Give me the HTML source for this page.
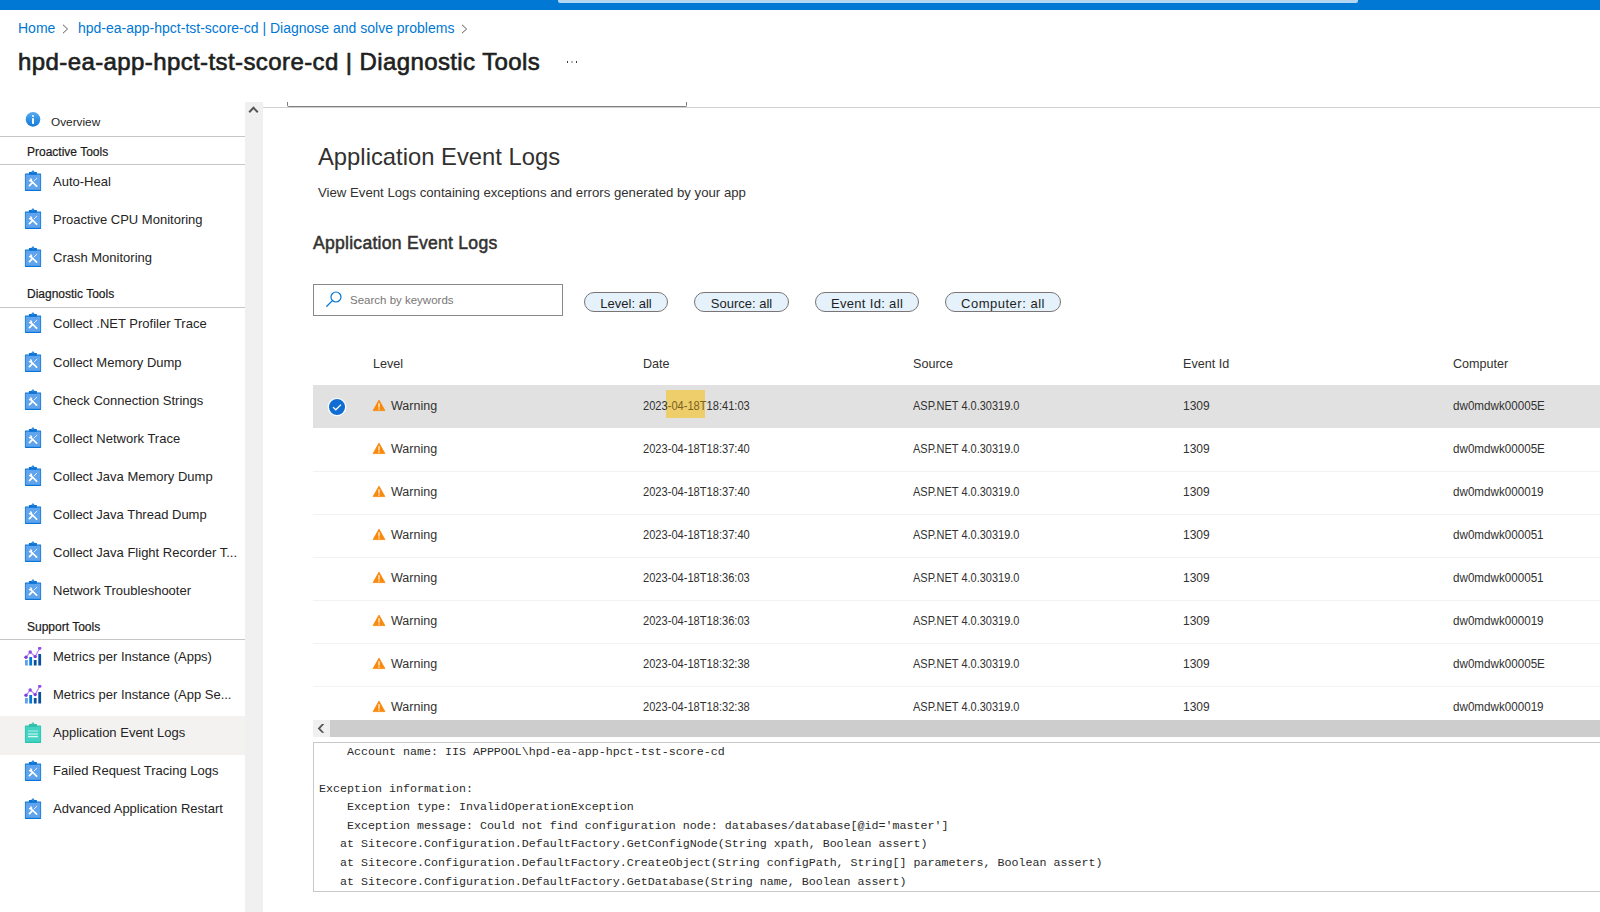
<!DOCTYPE html>
<html><head><meta charset="utf-8">
<style>
*{margin:0;padding:0;box-sizing:border-box}
html,body{width:1600px;height:912px;overflow:hidden;background:#fff;font-family:"Liberation Sans",sans-serif;color:#323130}
.a{position:absolute;white-space:nowrap}
#topbar{position:absolute;left:0;top:0;width:1600px;height:10px;background:#0078d4}
#topsearch{position:absolute;left:558px;top:0;width:800px;height:3px;background:#b3d6f2;border-radius:0 0 2px 2px}
.bc{font-size:14px;color:#0078d4;top:20px;line-height:17px}
.chev{position:absolute;top:24px;width:7px;height:10px}
#title{left:18px;top:48px;font-size:24px;line-height:28px;font-weight:normal;-webkit-text-stroke:0.65px #201f1e;letter-spacing:0.4px;color:#201f1e}
.sh{position:absolute;left:27px;font-size:12px;line-height:16px;color:#1b1a19;-webkit-text-stroke:0.2px #1b1a19;white-space:nowrap}
.st{position:absolute;left:53px;font-size:13px;line-height:16px;color:#252423;white-space:nowrap}
.sl{position:absolute;left:0;width:245px;height:1px;background:#c8c6c4}
#vscroll{position:absolute;left:245px;top:102px;width:18px;height:810px;background:#f0f0f0}
#hdrline{position:absolute;left:263px;top:107px;width:1337px;height:1px;background:#d0d0d0}
#hdrbox{position:absolute;left:287px;top:102px;width:400px;height:5px;border:1px solid #808080;border-top:none;border-radius:0 0 2px 2px;background:#fff}
.pill{position:absolute;top:292px;height:20px;border:1px solid #7a7574;border-radius:10px;background:#e5f1fb;font-size:13px;color:#201f1e;text-align:center;line-height:21px;white-space:nowrap}
.th{position:absolute;top:356px;font-size:12.6px;line-height:16px;color:#323130;white-space:nowrap}
.row{position:absolute;left:313px;width:1287px;height:43px}
.row .c{position:absolute;top:13px;font-size:12.5px;line-height:16px;color:#323130;white-space:nowrap}
.row .c2{position:absolute;top:14px;font-size:12px;line-height:14px;color:#323130;white-space:nowrap;transform-origin:0 50%}
#hscroll{position:absolute;left:313px;top:720px;width:1287px;height:17px;background:#cdcdcd}
#hscroll .l{position:absolute;left:0;top:0;width:17px;height:17px;background:#f0f0f0}
#detail{position:absolute;left:313px;top:742px;width:1300px;height:150px;border:1px solid #c8c8c8;font-family:"Liberation Mono",monospace;font-size:11.67px;color:#2a2a2a;background:#fff}
.dl{position:absolute;left:5px;white-space:pre;line-height:18.45px}
</style></head><body>
<div id="topbar"></div><div id="topsearch"></div>

<div class="a bc" style="left:18px">Home</div>
<svg class="chev" style="left:62px" viewBox="0 0 7 10"><path d="M1 0.8 L5.6 5 L1 9.2" fill="none" stroke="#605e5c" stroke-width="1"/></svg>
<div class="a bc" style="left:78px">hpd-ea-app-hpct-tst-score-cd | Diagnose and solve problems</div>
<svg class="chev" style="left:461px" viewBox="0 0 7 10"><path d="M1 0.8 L5.6 5 L1 9.2" fill="none" stroke="#605e5c" stroke-width="1"/></svg>
<div class="a" id="title">hpd-ea-app-hpct-tst-score-cd | Diagnostic Tools</div>
<svg style="position:absolute;left:566px;top:60px" width="12" height="4"><rect x="1" y="1" width="1" height="2" fill="#3b3a39"/><rect x="5.5" y="1" width="1" height="2" fill="#777"/><rect x="10" y="1" width="1" height="2" fill="#3b3a39"/></svg>

<svg width="16" height="16" viewBox="0 0 16 16" style="position:absolute;left:25px;top:112px"><defs><linearGradient id="ig" x1="0" y1="0" x2="0" y2="1"><stop offset="0" stop-color="#55aaf0"/><stop offset="1" stop-color="#1379d8"/></linearGradient></defs><circle cx="8" cy="7.4" r="7.3" fill="url(#ig)"/><rect x="7.05" y="3.2" width="1.9" height="1.6" fill="#fff"/><rect x="7.05" y="6.2" width="1.9" height="5.7" fill="#fff"/></svg>
<div class="st" style="top:114px;left:51px;font-size:11.8px">Overview</div>
<div class="sl" style="top:136px"></div>
<div class="sh" style="top:144px">Proactive Tools</div>
<div class="sl" style="top:164px"></div>
<svg width="18" height="22" viewBox="0 0 18 22" style="position:absolute;left:24px;top:170px"><rect x="0.9" y="3.5" width="16.2" height="17.4" rx="0.6" fill="#0b74d6"/><rect x="1.6" y="4.5" width="14.8" height="15.3" fill="#5fa4ec"/><rect x="4.9" y="1.9" width="8" height="2.9" rx="0.3" fill="#0b74d6"/><circle cx="8.9" cy="1.6" r="1.2" fill="#0b74d6"/><circle cx="8.9" cy="1.9" r="0.55" fill="#8fc0f2"/>
<path d="M7.3 11 L12.6 16.2" stroke="#fff" stroke-width="1.7" stroke-linecap="round"/><circle cx="6.5" cy="10.1" r="1.75" fill="#fff"/><circle cx="5.5" cy="9.1" r="0.95" fill="#5fa4ec"/><path d="M12.8 8.3 L10.1 10.9" stroke="#fff" stroke-width="1" stroke-linecap="round" opacity="0.85"/><path d="M8.6 12.4 L5.5 15.6" stroke="#fff" stroke-width="1.8" stroke-linecap="round"/></svg>
<div class="st" style="top:174px">Auto-Heal</div>
<svg width="18" height="22" viewBox="0 0 18 22" style="position:absolute;left:24px;top:208px"><rect x="0.9" y="3.5" width="16.2" height="17.4" rx="0.6" fill="#0b74d6"/><rect x="1.6" y="4.5" width="14.8" height="15.3" fill="#5fa4ec"/><rect x="4.9" y="1.9" width="8" height="2.9" rx="0.3" fill="#0b74d6"/><circle cx="8.9" cy="1.6" r="1.2" fill="#0b74d6"/><circle cx="8.9" cy="1.9" r="0.55" fill="#8fc0f2"/>
<path d="M7.3 11 L12.6 16.2" stroke="#fff" stroke-width="1.7" stroke-linecap="round"/><circle cx="6.5" cy="10.1" r="1.75" fill="#fff"/><circle cx="5.5" cy="9.1" r="0.95" fill="#5fa4ec"/><path d="M12.8 8.3 L10.1 10.9" stroke="#fff" stroke-width="1" stroke-linecap="round" opacity="0.85"/><path d="M8.6 12.4 L5.5 15.6" stroke="#fff" stroke-width="1.8" stroke-linecap="round"/></svg>
<div class="st" style="top:212px">Proactive CPU Monitoring</div>
<svg width="18" height="22" viewBox="0 0 18 22" style="position:absolute;left:24px;top:246px"><rect x="0.9" y="3.5" width="16.2" height="17.4" rx="0.6" fill="#0b74d6"/><rect x="1.6" y="4.5" width="14.8" height="15.3" fill="#5fa4ec"/><rect x="4.9" y="1.9" width="8" height="2.9" rx="0.3" fill="#0b74d6"/><circle cx="8.9" cy="1.6" r="1.2" fill="#0b74d6"/><circle cx="8.9" cy="1.9" r="0.55" fill="#8fc0f2"/>
<path d="M7.3 11 L12.6 16.2" stroke="#fff" stroke-width="1.7" stroke-linecap="round"/><circle cx="6.5" cy="10.1" r="1.75" fill="#fff"/><circle cx="5.5" cy="9.1" r="0.95" fill="#5fa4ec"/><path d="M12.8 8.3 L10.1 10.9" stroke="#fff" stroke-width="1" stroke-linecap="round" opacity="0.85"/><path d="M8.6 12.4 L5.5 15.6" stroke="#fff" stroke-width="1.8" stroke-linecap="round"/></svg>
<div class="st" style="top:250px">Crash Monitoring</div>
<div class="sh" style="top:286px">Diagnostic Tools</div>
<div class="sl" style="top:307px"></div>
<svg width="18" height="22" viewBox="0 0 18 22" style="position:absolute;left:24px;top:312px"><rect x="0.9" y="3.5" width="16.2" height="17.4" rx="0.6" fill="#0b74d6"/><rect x="1.6" y="4.5" width="14.8" height="15.3" fill="#5fa4ec"/><rect x="4.9" y="1.9" width="8" height="2.9" rx="0.3" fill="#0b74d6"/><circle cx="8.9" cy="1.6" r="1.2" fill="#0b74d6"/><circle cx="8.9" cy="1.9" r="0.55" fill="#8fc0f2"/>
<path d="M7.3 11 L12.6 16.2" stroke="#fff" stroke-width="1.7" stroke-linecap="round"/><circle cx="6.5" cy="10.1" r="1.75" fill="#fff"/><circle cx="5.5" cy="9.1" r="0.95" fill="#5fa4ec"/><path d="M12.8 8.3 L10.1 10.9" stroke="#fff" stroke-width="1" stroke-linecap="round" opacity="0.85"/><path d="M8.6 12.4 L5.5 15.6" stroke="#fff" stroke-width="1.8" stroke-linecap="round"/></svg>
<div class="st" style="top:316px">Collect .NET Profiler Trace</div>
<svg width="18" height="22" viewBox="0 0 18 22" style="position:absolute;left:24px;top:351px"><rect x="0.9" y="3.5" width="16.2" height="17.4" rx="0.6" fill="#0b74d6"/><rect x="1.6" y="4.5" width="14.8" height="15.3" fill="#5fa4ec"/><rect x="4.9" y="1.9" width="8" height="2.9" rx="0.3" fill="#0b74d6"/><circle cx="8.9" cy="1.6" r="1.2" fill="#0b74d6"/><circle cx="8.9" cy="1.9" r="0.55" fill="#8fc0f2"/>
<path d="M7.3 11 L12.6 16.2" stroke="#fff" stroke-width="1.7" stroke-linecap="round"/><circle cx="6.5" cy="10.1" r="1.75" fill="#fff"/><circle cx="5.5" cy="9.1" r="0.95" fill="#5fa4ec"/><path d="M12.8 8.3 L10.1 10.9" stroke="#fff" stroke-width="1" stroke-linecap="round" opacity="0.85"/><path d="M8.6 12.4 L5.5 15.6" stroke="#fff" stroke-width="1.8" stroke-linecap="round"/></svg>
<div class="st" style="top:355px">Collect Memory Dump</div>
<svg width="18" height="22" viewBox="0 0 18 22" style="position:absolute;left:24px;top:389px"><rect x="0.9" y="3.5" width="16.2" height="17.4" rx="0.6" fill="#0b74d6"/><rect x="1.6" y="4.5" width="14.8" height="15.3" fill="#5fa4ec"/><rect x="4.9" y="1.9" width="8" height="2.9" rx="0.3" fill="#0b74d6"/><circle cx="8.9" cy="1.6" r="1.2" fill="#0b74d6"/><circle cx="8.9" cy="1.9" r="0.55" fill="#8fc0f2"/>
<path d="M7.3 11 L12.6 16.2" stroke="#fff" stroke-width="1.7" stroke-linecap="round"/><circle cx="6.5" cy="10.1" r="1.75" fill="#fff"/><circle cx="5.5" cy="9.1" r="0.95" fill="#5fa4ec"/><path d="M12.8 8.3 L10.1 10.9" stroke="#fff" stroke-width="1" stroke-linecap="round" opacity="0.85"/><path d="M8.6 12.4 L5.5 15.6" stroke="#fff" stroke-width="1.8" stroke-linecap="round"/></svg>
<div class="st" style="top:393px">Check Connection Strings</div>
<svg width="18" height="22" viewBox="0 0 18 22" style="position:absolute;left:24px;top:427px"><rect x="0.9" y="3.5" width="16.2" height="17.4" rx="0.6" fill="#0b74d6"/><rect x="1.6" y="4.5" width="14.8" height="15.3" fill="#5fa4ec"/><rect x="4.9" y="1.9" width="8" height="2.9" rx="0.3" fill="#0b74d6"/><circle cx="8.9" cy="1.6" r="1.2" fill="#0b74d6"/><circle cx="8.9" cy="1.9" r="0.55" fill="#8fc0f2"/>
<path d="M7.3 11 L12.6 16.2" stroke="#fff" stroke-width="1.7" stroke-linecap="round"/><circle cx="6.5" cy="10.1" r="1.75" fill="#fff"/><circle cx="5.5" cy="9.1" r="0.95" fill="#5fa4ec"/><path d="M12.8 8.3 L10.1 10.9" stroke="#fff" stroke-width="1" stroke-linecap="round" opacity="0.85"/><path d="M8.6 12.4 L5.5 15.6" stroke="#fff" stroke-width="1.8" stroke-linecap="round"/></svg>
<div class="st" style="top:431px">Collect Network Trace</div>
<svg width="18" height="22" viewBox="0 0 18 22" style="position:absolute;left:24px;top:465px"><rect x="0.9" y="3.5" width="16.2" height="17.4" rx="0.6" fill="#0b74d6"/><rect x="1.6" y="4.5" width="14.8" height="15.3" fill="#5fa4ec"/><rect x="4.9" y="1.9" width="8" height="2.9" rx="0.3" fill="#0b74d6"/><circle cx="8.9" cy="1.6" r="1.2" fill="#0b74d6"/><circle cx="8.9" cy="1.9" r="0.55" fill="#8fc0f2"/>
<path d="M7.3 11 L12.6 16.2" stroke="#fff" stroke-width="1.7" stroke-linecap="round"/><circle cx="6.5" cy="10.1" r="1.75" fill="#fff"/><circle cx="5.5" cy="9.1" r="0.95" fill="#5fa4ec"/><path d="M12.8 8.3 L10.1 10.9" stroke="#fff" stroke-width="1" stroke-linecap="round" opacity="0.85"/><path d="M8.6 12.4 L5.5 15.6" stroke="#fff" stroke-width="1.8" stroke-linecap="round"/></svg>
<div class="st" style="top:469px">Collect Java Memory Dump</div>
<svg width="18" height="22" viewBox="0 0 18 22" style="position:absolute;left:24px;top:503px"><rect x="0.9" y="3.5" width="16.2" height="17.4" rx="0.6" fill="#0b74d6"/><rect x="1.6" y="4.5" width="14.8" height="15.3" fill="#5fa4ec"/><rect x="4.9" y="1.9" width="8" height="2.9" rx="0.3" fill="#0b74d6"/><circle cx="8.9" cy="1.6" r="1.2" fill="#0b74d6"/><circle cx="8.9" cy="1.9" r="0.55" fill="#8fc0f2"/>
<path d="M7.3 11 L12.6 16.2" stroke="#fff" stroke-width="1.7" stroke-linecap="round"/><circle cx="6.5" cy="10.1" r="1.75" fill="#fff"/><circle cx="5.5" cy="9.1" r="0.95" fill="#5fa4ec"/><path d="M12.8 8.3 L10.1 10.9" stroke="#fff" stroke-width="1" stroke-linecap="round" opacity="0.85"/><path d="M8.6 12.4 L5.5 15.6" stroke="#fff" stroke-width="1.8" stroke-linecap="round"/></svg>
<div class="st" style="top:507px">Collect Java Thread Dump</div>
<svg width="18" height="22" viewBox="0 0 18 22" style="position:absolute;left:24px;top:541px"><rect x="0.9" y="3.5" width="16.2" height="17.4" rx="0.6" fill="#0b74d6"/><rect x="1.6" y="4.5" width="14.8" height="15.3" fill="#5fa4ec"/><rect x="4.9" y="1.9" width="8" height="2.9" rx="0.3" fill="#0b74d6"/><circle cx="8.9" cy="1.6" r="1.2" fill="#0b74d6"/><circle cx="8.9" cy="1.9" r="0.55" fill="#8fc0f2"/>
<path d="M7.3 11 L12.6 16.2" stroke="#fff" stroke-width="1.7" stroke-linecap="round"/><circle cx="6.5" cy="10.1" r="1.75" fill="#fff"/><circle cx="5.5" cy="9.1" r="0.95" fill="#5fa4ec"/><path d="M12.8 8.3 L10.1 10.9" stroke="#fff" stroke-width="1" stroke-linecap="round" opacity="0.85"/><path d="M8.6 12.4 L5.5 15.6" stroke="#fff" stroke-width="1.8" stroke-linecap="round"/></svg>
<div class="st" style="top:545px">Collect Java Flight Recorder T...</div>
<svg width="18" height="22" viewBox="0 0 18 22" style="position:absolute;left:24px;top:579px"><rect x="0.9" y="3.5" width="16.2" height="17.4" rx="0.6" fill="#0b74d6"/><rect x="1.6" y="4.5" width="14.8" height="15.3" fill="#5fa4ec"/><rect x="4.9" y="1.9" width="8" height="2.9" rx="0.3" fill="#0b74d6"/><circle cx="8.9" cy="1.6" r="1.2" fill="#0b74d6"/><circle cx="8.9" cy="1.9" r="0.55" fill="#8fc0f2"/>
<path d="M7.3 11 L12.6 16.2" stroke="#fff" stroke-width="1.7" stroke-linecap="round"/><circle cx="6.5" cy="10.1" r="1.75" fill="#fff"/><circle cx="5.5" cy="9.1" r="0.95" fill="#5fa4ec"/><path d="M12.8 8.3 L10.1 10.9" stroke="#fff" stroke-width="1" stroke-linecap="round" opacity="0.85"/><path d="M8.6 12.4 L5.5 15.6" stroke="#fff" stroke-width="1.8" stroke-linecap="round"/></svg>
<div class="st" style="top:583px">Network Troubleshooter</div>
<div class="sh" style="top:619px">Support Tools</div>
<div class="sl" style="top:639px"></div>
<svg width="18" height="20" viewBox="0 0 18 20" style="position:absolute;left:24px;top:647px"><rect x="1" y="13" width="2.8" height="5.5" fill="#5ea0ef"/><rect x="5.3" y="10" width="2.8" height="8.5" fill="#0078d4"/><rect x="9.8" y="13" width="2.8" height="5.5" fill="#0a4fa0"/><rect x="14.3" y="7" width="2.8" height="11.5" fill="#0a4fa0"/>
<path d="M2 10.3 L6.2 5 L11.2 9.6 L15.7 1.3" stroke="#b77af4" stroke-width="1.1" fill="none"/><circle cx="2" cy="10.3" r="1.7" fill="#7a3ee0"/><circle cx="6.2" cy="5" r="1.7" fill="#8a4ee6"/><circle cx="11.2" cy="9.6" r="1.7" fill="#7a3ee0"/><circle cx="15.7" cy="1.3" r="1.7" fill="#8f52ea"/></svg>
<div class="st" style="top:649px">Metrics per Instance (Apps)</div>
<svg width="18" height="20" viewBox="0 0 18 20" style="position:absolute;left:24px;top:685px"><rect x="1" y="13" width="2.8" height="5.5" fill="#5ea0ef"/><rect x="5.3" y="10" width="2.8" height="8.5" fill="#0078d4"/><rect x="9.8" y="13" width="2.8" height="5.5" fill="#0a4fa0"/><rect x="14.3" y="7" width="2.8" height="11.5" fill="#0a4fa0"/>
<path d="M2 10.3 L6.2 5 L11.2 9.6 L15.7 1.3" stroke="#b77af4" stroke-width="1.1" fill="none"/><circle cx="2" cy="10.3" r="1.7" fill="#7a3ee0"/><circle cx="6.2" cy="5" r="1.7" fill="#8a4ee6"/><circle cx="11.2" cy="9.6" r="1.7" fill="#7a3ee0"/><circle cx="15.7" cy="1.3" r="1.7" fill="#8f52ea"/></svg>
<div class="st" style="top:687px">Metrics per Instance (App Se...</div>
<div style="position:absolute;left:0;top:716px;width:245px;height:39px;background:#f3f2f1"></div>
<svg width="18" height="22" viewBox="0 0 18 22" style="position:absolute;left:24px;top:722px"><rect x="0.9" y="3.5" width="16.2" height="17.4" rx="0.6" fill="#2cc1ad"/><rect x="1.6" y="4.5" width="14.8" height="15.3" fill="#42d3c3"/><rect x="4.9" y="1.9" width="8" height="2.9" rx="0.3" fill="#33bca9"/><circle cx="8.9" cy="1.6" r="1.2" fill="#33bca9"/><circle cx="8.9" cy="1.9" r="0.55" fill="#7fdccf"/>
<rect x="4" y="8.2" width="9.9" height="1.6" fill="#8de3d9"/><rect x="4" y="11.2" width="9.9" height="1.6" fill="#a6ebe3"/><rect x="4" y="13.9" width="9.9" height="1.4" fill="#d8f7f3"/></svg>
<div class="st" style="top:725px">Application Event Logs</div>
<svg width="18" height="22" viewBox="0 0 18 22" style="position:absolute;left:24px;top:760px"><rect x="0.9" y="3.5" width="16.2" height="17.4" rx="0.6" fill="#0b74d6"/><rect x="1.6" y="4.5" width="14.8" height="15.3" fill="#5fa4ec"/><rect x="4.9" y="1.9" width="8" height="2.9" rx="0.3" fill="#0b74d6"/><circle cx="8.9" cy="1.6" r="1.2" fill="#0b74d6"/><circle cx="8.9" cy="1.9" r="0.55" fill="#8fc0f2"/>
<path d="M7.3 11 L12.6 16.2" stroke="#fff" stroke-width="1.7" stroke-linecap="round"/><circle cx="6.5" cy="10.1" r="1.75" fill="#fff"/><circle cx="5.5" cy="9.1" r="0.95" fill="#5fa4ec"/><path d="M12.8 8.3 L10.1 10.9" stroke="#fff" stroke-width="1" stroke-linecap="round" opacity="0.85"/><path d="M8.6 12.4 L5.5 15.6" stroke="#fff" stroke-width="1.8" stroke-linecap="round"/></svg>
<div class="st" style="top:763px">Failed Request Tracing Logs</div>
<svg width="18" height="22" viewBox="0 0 18 22" style="position:absolute;left:24px;top:798px"><rect x="0.9" y="3.5" width="16.2" height="17.4" rx="0.6" fill="#0b74d6"/><rect x="1.6" y="4.5" width="14.8" height="15.3" fill="#5fa4ec"/><rect x="4.9" y="1.9" width="8" height="2.9" rx="0.3" fill="#0b74d6"/><circle cx="8.9" cy="1.6" r="1.2" fill="#0b74d6"/><circle cx="8.9" cy="1.9" r="0.55" fill="#8fc0f2"/>
<path d="M7.3 11 L12.6 16.2" stroke="#fff" stroke-width="1.7" stroke-linecap="round"/><circle cx="6.5" cy="10.1" r="1.75" fill="#fff"/><circle cx="5.5" cy="9.1" r="0.95" fill="#5fa4ec"/><path d="M12.8 8.3 L10.1 10.9" stroke="#fff" stroke-width="1" stroke-linecap="round" opacity="0.85"/><path d="M8.6 12.4 L5.5 15.6" stroke="#fff" stroke-width="1.8" stroke-linecap="round"/></svg>
<div class="st" style="top:801px">Advanced Application Restart</div>

<div id="vscroll"></div>
<svg style="position:absolute;left:248px;top:105px" width="11" height="9" viewBox="0 0 11 9"><path d="M1.2 7.2 L5.5 2.8 L9.8 7.2" fill="none" stroke="#555" stroke-width="2"/></svg>

<div id="hdrline"></div><div id="hdrbox"></div>

<div class="a" style="left:318px;top:143px;font-size:23.8px;line-height:28px;color:#323130">Application Event Logs</div>
<div class="a" style="left:318px;top:185px;font-size:13.2px;line-height:16px;color:#323130">View Event Logs containing exceptions and errors generated by your app</div>
<div class="a" style="left:313px;top:232px;font-size:17.6px;line-height:22px;font-weight:normal;-webkit-text-stroke:0.5px #323130;letter-spacing:0.25px;color:#323130">Application Event Logs</div>

<div style="position:absolute;left:313px;top:284px;width:250px;height:32px;border:1px solid #8a8886;background:#fff"></div>
<svg style="position:absolute;left:325px;top:290px" width="18" height="18" viewBox="0 0 18 18"><circle cx="11" cy="7" r="5" fill="none" stroke="#0078d4" stroke-width="1.2"/><path d="M7.4 10.6 L1.8 16.2" stroke="#0078d4" stroke-width="1.3" stroke-linecap="round"/></svg>
<div class="a" style="left:350px;top:293px;font-size:11.5px;line-height:15px;color:#797775">Search by keywords</div>

<div class="pill" style="left:584px;width:84px">Level: all</div>
<div class="pill" style="left:694px;width:95px">Source: all</div>
<div class="pill" style="left:815px;width:104px;letter-spacing:0.33px">Event Id: all</div>
<div class="pill" style="left:945px;width:116px;letter-spacing:0.5px">Computer: all</div>

<div class="th" style="left:373px">Level</div>
<div class="th" style="left:643px">Date</div>
<div class="th" style="left:913px">Source</div>
<div class="th" style="left:1183px">Event Id</div>
<div class="th" style="left:1453px">Computer</div>

<div class="row" style="top:385px;background:#e1e1e1;"><svg width="20" height="20" viewBox="0 0 20 20" style="position:absolute;left:14px;top:12px"><circle cx="10" cy="10" r="8.7" fill="#106ed2" stroke="#fff" stroke-width="1.3"/><path d="M6 10.1 L8.8 12.8 L14 7.6" stroke="#fff" stroke-width="1.3" fill="none"/></svg><svg width="14" height="13" viewBox="0 0 14 13" style="position:absolute;left:59px;top:14px"><path d="M7 1.1 L12.9 11.6 L1.1 11.6 Z" fill="#f7890c" stroke="#f7890c" stroke-width="0.8" stroke-linejoin="round"/><rect x="6.25" y="4.2" width="1.5" height="4.4" fill="#fde3c2"/><rect x="6.25" y="9.4" width="1.5" height="1.4" fill="#fde3c2"/></svg><span class="c" style="left:78px">Warning</span><div style="position:absolute;left:353px;top:5px;width:39px;height:28px;background:#eecd6b"></div><span class="c2" style="left:330px;transform:scaleX(0.925)">2023<span style="color:#7a6320">-04-18T</span>18:41:03</span><span class="c2" style="left:600px;transform:scaleX(0.915)">ASP.NET 4.0.30319.0</span><span class="c2" style="left:870px">1309</span><span class="c2" style="left:1140px;transform:scaleX(0.97)">dw0mdwk00005E</span></div>
<div class="row" style="top:428px;"><svg width="14" height="13" viewBox="0 0 14 13" style="position:absolute;left:59px;top:14px"><path d="M7 1.1 L12.9 11.6 L1.1 11.6 Z" fill="#f7890c" stroke="#f7890c" stroke-width="0.8" stroke-linejoin="round"/><rect x="6.25" y="4.2" width="1.5" height="4.4" fill="#fde3c2"/><rect x="6.25" y="9.4" width="1.5" height="1.4" fill="#fde3c2"/></svg><span class="c" style="left:78px">Warning</span><span class="c2" style="left:330px;transform:scaleX(0.925)">2023-04-18T18:37:40</span><span class="c2" style="left:600px;transform:scaleX(0.915)">ASP.NET 4.0.30319.0</span><span class="c2" style="left:870px">1309</span><span class="c2" style="left:1140px;transform:scaleX(0.97)">dw0mdwk00005E</span></div>
<div style="position:absolute;left:313px;top:471px;width:1287px;height:1px;background:#f3f2f1"></div>
<div class="row" style="top:471px;"><svg width="14" height="13" viewBox="0 0 14 13" style="position:absolute;left:59px;top:14px"><path d="M7 1.1 L12.9 11.6 L1.1 11.6 Z" fill="#f7890c" stroke="#f7890c" stroke-width="0.8" stroke-linejoin="round"/><rect x="6.25" y="4.2" width="1.5" height="4.4" fill="#fde3c2"/><rect x="6.25" y="9.4" width="1.5" height="1.4" fill="#fde3c2"/></svg><span class="c" style="left:78px">Warning</span><span class="c2" style="left:330px;transform:scaleX(0.925)">2023-04-18T18:37:40</span><span class="c2" style="left:600px;transform:scaleX(0.915)">ASP.NET 4.0.30319.0</span><span class="c2" style="left:870px">1309</span><span class="c2" style="left:1140px;transform:scaleX(0.97)">dw0mdwk000019</span></div>
<div style="position:absolute;left:313px;top:514px;width:1287px;height:1px;background:#f3f2f1"></div>
<div class="row" style="top:514px;"><svg width="14" height="13" viewBox="0 0 14 13" style="position:absolute;left:59px;top:14px"><path d="M7 1.1 L12.9 11.6 L1.1 11.6 Z" fill="#f7890c" stroke="#f7890c" stroke-width="0.8" stroke-linejoin="round"/><rect x="6.25" y="4.2" width="1.5" height="4.4" fill="#fde3c2"/><rect x="6.25" y="9.4" width="1.5" height="1.4" fill="#fde3c2"/></svg><span class="c" style="left:78px">Warning</span><span class="c2" style="left:330px;transform:scaleX(0.925)">2023-04-18T18:37:40</span><span class="c2" style="left:600px;transform:scaleX(0.915)">ASP.NET 4.0.30319.0</span><span class="c2" style="left:870px">1309</span><span class="c2" style="left:1140px;transform:scaleX(0.97)">dw0mdwk000051</span></div>
<div style="position:absolute;left:313px;top:557px;width:1287px;height:1px;background:#f3f2f1"></div>
<div class="row" style="top:557px;"><svg width="14" height="13" viewBox="0 0 14 13" style="position:absolute;left:59px;top:14px"><path d="M7 1.1 L12.9 11.6 L1.1 11.6 Z" fill="#f7890c" stroke="#f7890c" stroke-width="0.8" stroke-linejoin="round"/><rect x="6.25" y="4.2" width="1.5" height="4.4" fill="#fde3c2"/><rect x="6.25" y="9.4" width="1.5" height="1.4" fill="#fde3c2"/></svg><span class="c" style="left:78px">Warning</span><span class="c2" style="left:330px;transform:scaleX(0.925)">2023-04-18T18:36:03</span><span class="c2" style="left:600px;transform:scaleX(0.915)">ASP.NET 4.0.30319.0</span><span class="c2" style="left:870px">1309</span><span class="c2" style="left:1140px;transform:scaleX(0.97)">dw0mdwk000051</span></div>
<div style="position:absolute;left:313px;top:600px;width:1287px;height:1px;background:#f3f2f1"></div>
<div class="row" style="top:600px;"><svg width="14" height="13" viewBox="0 0 14 13" style="position:absolute;left:59px;top:14px"><path d="M7 1.1 L12.9 11.6 L1.1 11.6 Z" fill="#f7890c" stroke="#f7890c" stroke-width="0.8" stroke-linejoin="round"/><rect x="6.25" y="4.2" width="1.5" height="4.4" fill="#fde3c2"/><rect x="6.25" y="9.4" width="1.5" height="1.4" fill="#fde3c2"/></svg><span class="c" style="left:78px">Warning</span><span class="c2" style="left:330px;transform:scaleX(0.925)">2023-04-18T18:36:03</span><span class="c2" style="left:600px;transform:scaleX(0.915)">ASP.NET 4.0.30319.0</span><span class="c2" style="left:870px">1309</span><span class="c2" style="left:1140px;transform:scaleX(0.97)">dw0mdwk000019</span></div>
<div style="position:absolute;left:313px;top:643px;width:1287px;height:1px;background:#f3f2f1"></div>
<div class="row" style="top:643px;"><svg width="14" height="13" viewBox="0 0 14 13" style="position:absolute;left:59px;top:14px"><path d="M7 1.1 L12.9 11.6 L1.1 11.6 Z" fill="#f7890c" stroke="#f7890c" stroke-width="0.8" stroke-linejoin="round"/><rect x="6.25" y="4.2" width="1.5" height="4.4" fill="#fde3c2"/><rect x="6.25" y="9.4" width="1.5" height="1.4" fill="#fde3c2"/></svg><span class="c" style="left:78px">Warning</span><span class="c2" style="left:330px;transform:scaleX(0.925)">2023-04-18T18:32:38</span><span class="c2" style="left:600px;transform:scaleX(0.915)">ASP.NET 4.0.30319.0</span><span class="c2" style="left:870px">1309</span><span class="c2" style="left:1140px;transform:scaleX(0.97)">dw0mdwk00005E</span></div>
<div style="position:absolute;left:313px;top:686px;width:1287px;height:1px;background:#f3f2f1"></div>
<div class="row" style="top:686px;"><svg width="14" height="13" viewBox="0 0 14 13" style="position:absolute;left:59px;top:14px"><path d="M7 1.1 L12.9 11.6 L1.1 11.6 Z" fill="#f7890c" stroke="#f7890c" stroke-width="0.8" stroke-linejoin="round"/><rect x="6.25" y="4.2" width="1.5" height="4.4" fill="#fde3c2"/><rect x="6.25" y="9.4" width="1.5" height="1.4" fill="#fde3c2"/></svg><span class="c" style="left:78px">Warning</span><span class="c2" style="left:330px;transform:scaleX(0.925)">2023-04-18T18:32:38</span><span class="c2" style="left:600px;transform:scaleX(0.915)">ASP.NET 4.0.30319.0</span><span class="c2" style="left:870px">1309</span><span class="c2" style="left:1140px;transform:scaleX(0.97)">dw0mdwk000019</span></div>
<div style="position:absolute;left:313px;top:729px;width:1287px;height:1px;background:#f3f2f1"></div>

<div id="hscroll"><div class="l"></div></div>
<svg style="position:absolute;left:316px;top:723px" width="10" height="11" viewBox="0 0 10 11"><path d="M8.3 1 L5.9 1 L1.7 5.4 L5.9 9.8 L8.3 9.8 L4.2 5.4 Z" fill="#555"/></svg>

<div id="detail"><div class="dl" style="top:0px">    Account name: IIS APPPOOL\hpd-ea-app-hpct-tst-score-cd</div><div class="dl" style="top:37px">Exception information:</div><div class="dl" style="top:55px">    Exception type: InvalidOperationException</div><div class="dl" style="top:74px">    Exception message: Could not find configuration node: databases/database[@id=&#x27;master&#x27;]</div><div class="dl" style="top:92px">   at Sitecore.Configuration.DefaultFactory.GetConfigNode(String xpath, Boolean assert)</div><div class="dl" style="top:111px">   at Sitecore.Configuration.DefaultFactory.CreateObject(String configPath, String[] parameters, Boolean assert)</div><div class="dl" style="top:130px">   at Sitecore.Configuration.DefaultFactory.GetDatabase(String name, Boolean assert)</div></div>
</body></html>
